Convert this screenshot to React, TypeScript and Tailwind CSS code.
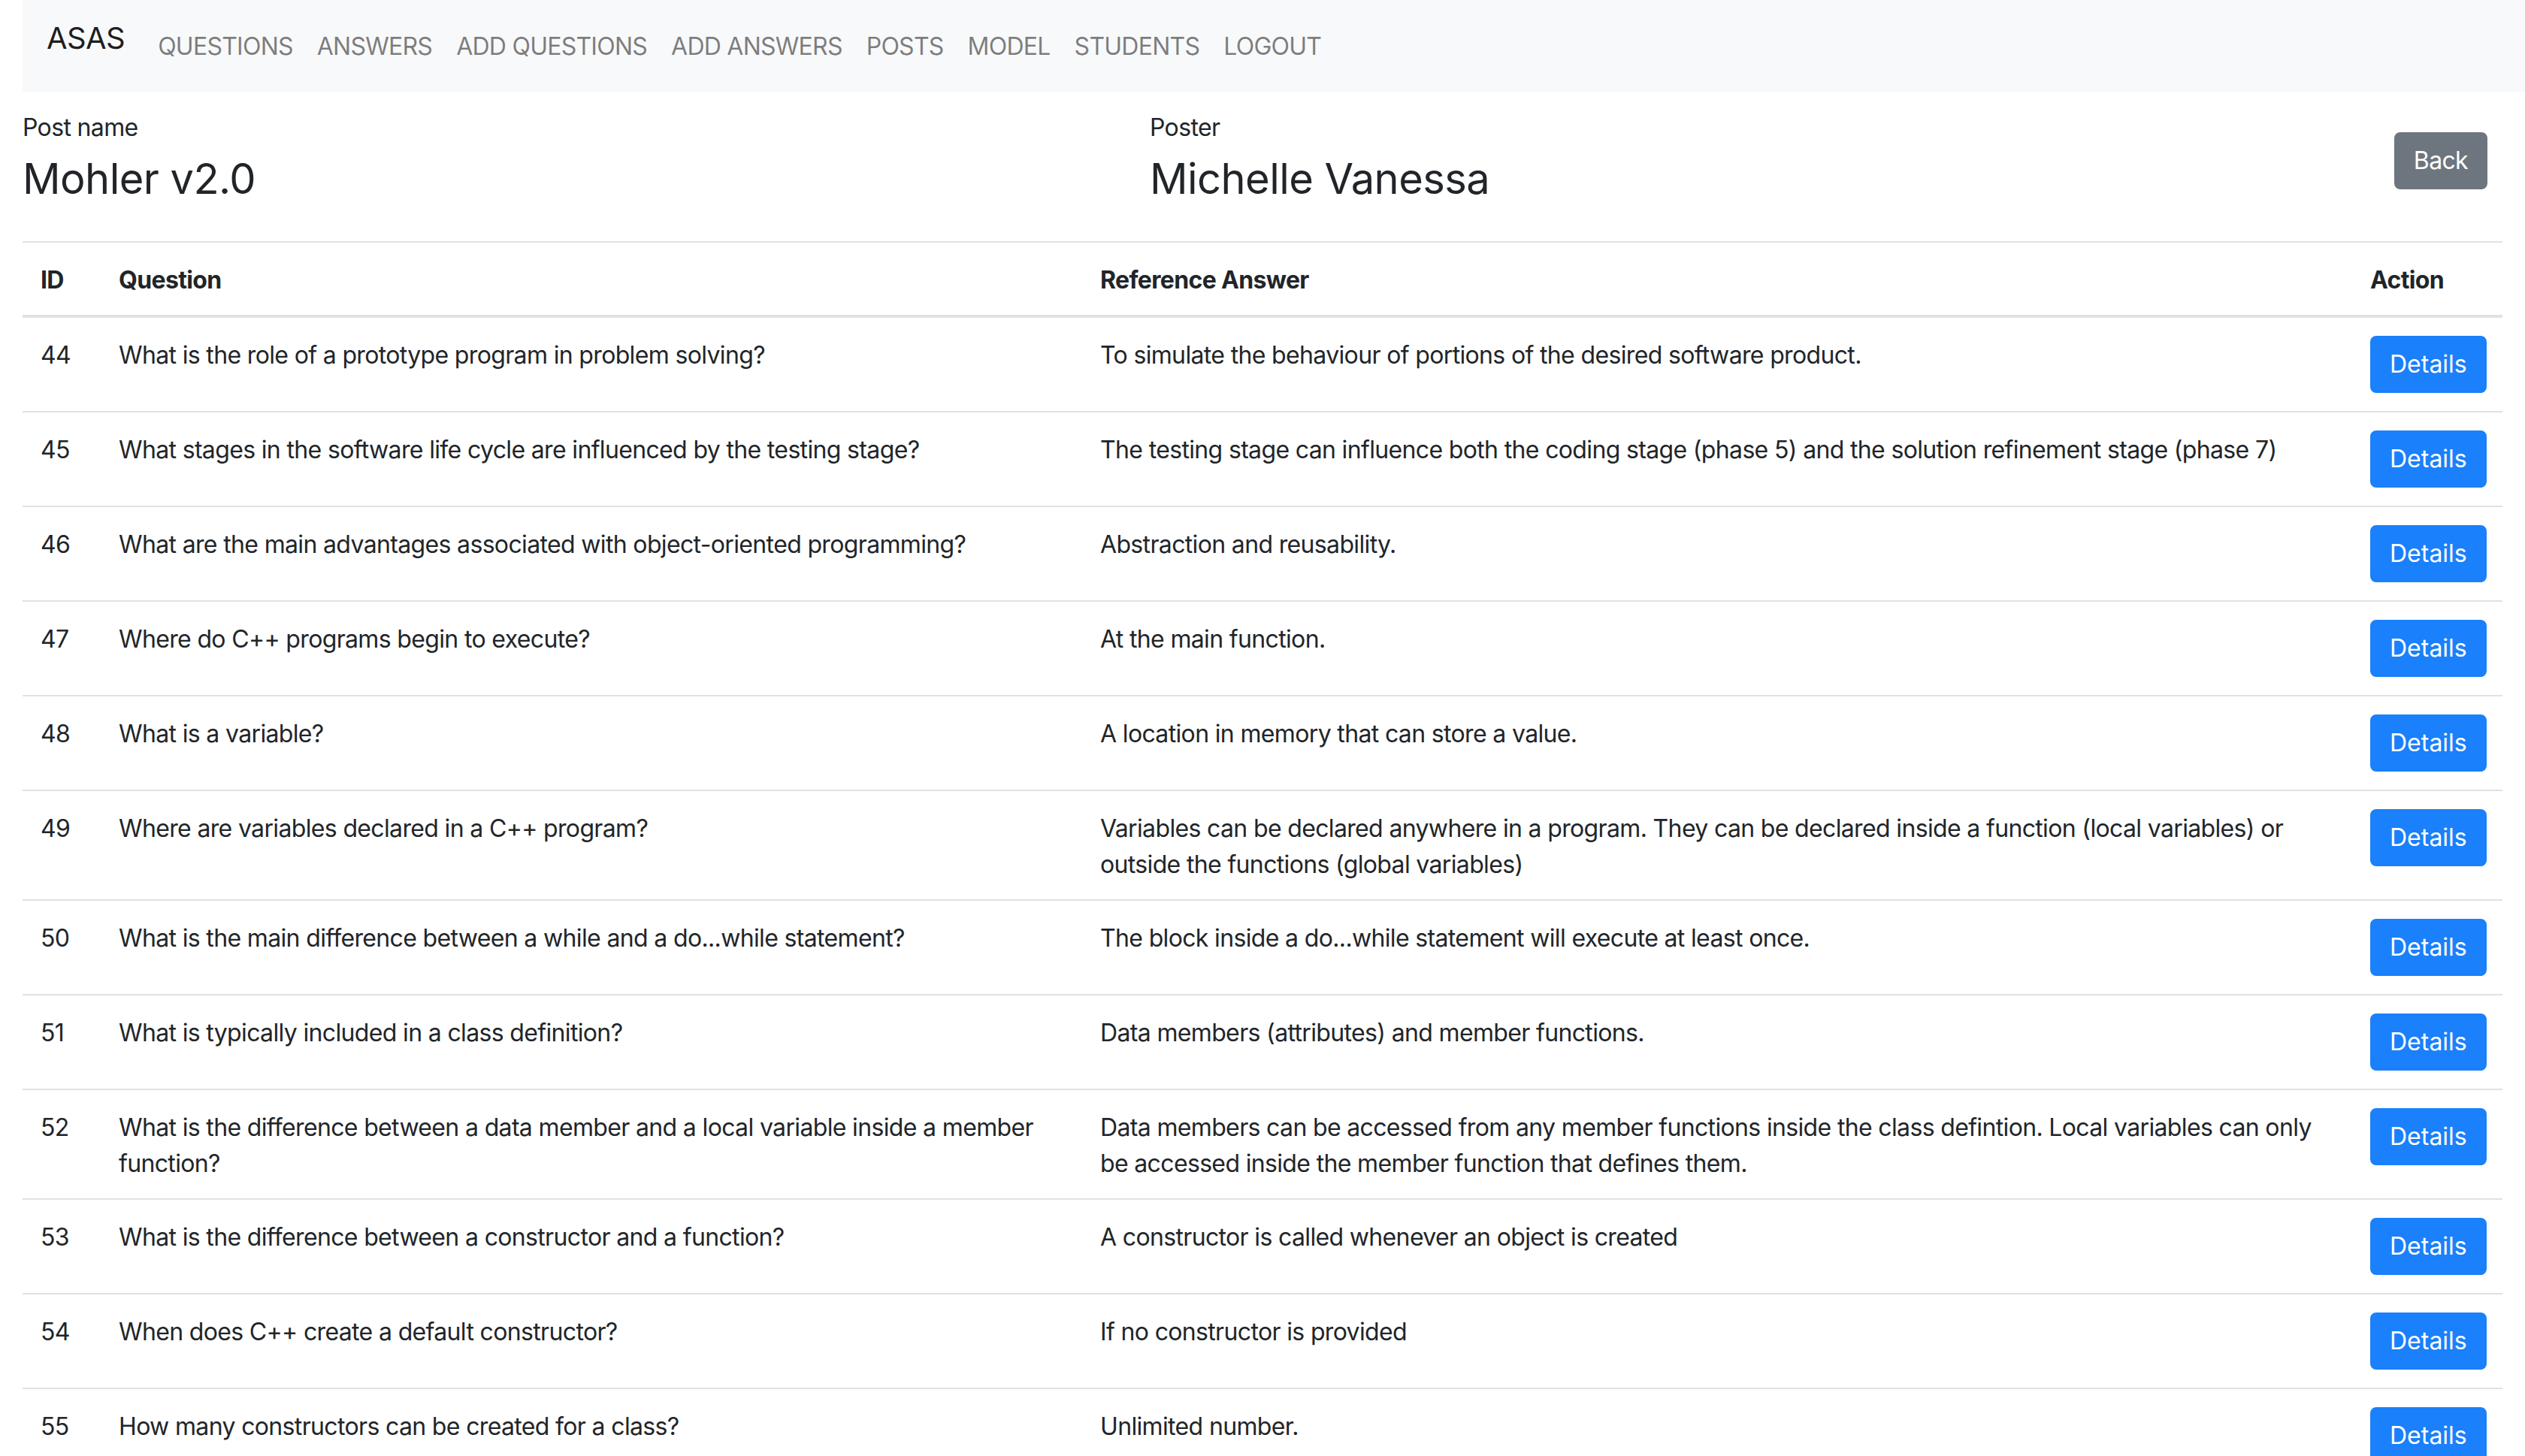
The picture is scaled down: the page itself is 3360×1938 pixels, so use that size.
const navLinks = ["QUESTIONS", "ANSWERS", "ADD QUESTIONS", "ADD ANSWERS", "POSTS", "MODEL", "STUDENTS", "LOGOUT"]

const rows = [
    { id: 44, question: "What is the role of a prototype program in problem solving?", answer: "To simulate the behaviour of portions of the desired software product." },
    { id: 45, question: "What stages in the software life cycle are influenced by the testing stage?", answer: "The testing stage can influence both the coding stage (phase 5) and the solution refinement stage (phase 7)" },
    { id: 46, question: "What are the main advantages associated with object-oriented programming?", answer: "Abstraction and reusability." },
    { id: 47, question: "Where do C++ programs begin to execute?", answer: "At the main function." },
    { id: 48, question: "What is a variable?", answer: "A location in memory that can store a value." },
    { id: 49, question: "Where are variables declared in a C++ program?", answer: "Variables can be declared anywhere in a program. They can be declared inside a function (local variables) or outside the functions (global variables)" },
    { id: 50, question: "What is the main difference between a while and a do...while statement?", answer: "The block inside a do...while statement will execute at least once." },
    { id: 51, question: "What is typically included in a class definition?", answer: "Data members (attributes) and member functions." },
    { id: 52, question: "What is the difference between a data member and a local variable inside a member function?", answer: "Data members can be accessed from any member functions inside the class defintion. Local variables can only be accessed inside the member function that defines them." },
    { id: 53, question: "What is the difference between a constructor and a function?", answer: "A constructor is called whenever an object is created" },
    { id: 54, question: "When does C++ create a default constructor?", answer: "If no constructor is provided" },
    { id: 55, question: "How many constructors can be created for a class?", answer: "Unlimited number." },
]

const cell = "pt-[26px] pb-[22px] px-[24px] align-top border-t-2 border-[#dee2e6]"
const headCell = "pt-[26px] pb-[22px] px-[24px] text-left font-bold border-t-2 border-b-4 border-[#dee2e6]"

export default function App() {
    return (
        <div className="min-h-screen bg-white text-[#212529] text-[32px] leading-[48px] tracking-[-0.65px]" style={{ fontFamily: "Inter, 'Noto Sans', sans-serif" }}>
            <nav className="ml-[30px] h-[123px] bg-[#f8f9fa] flex items-start pl-[32px] pt-[21px]">
                <span className="text-[40px] leading-[60px] text-black/90 mr-[28px] tracking-[-0.6px]">ASAS</span>
                <ul className="flex mt-[17px] tracking-[-0.75px]">
                    {navLinks.map((l) => (
                        <li key={l} className="px-[16px] text-black/50">{l}</li>
                    ))}
                </ul>
            </nav>

            <div className="px-[30px]">
                <div className="flex items-start mt-[23px]">
                    <div className="w-[1500px]">
                        <div>Post name</div>
                        <h3 className="mt-[11px] text-[56px] leading-[67px] tracking-[-0.55px]">Mohler v2.0</h3>
                    </div>
                    <div className="flex-1">
                        <div>Poster</div>
                        <h3 className="mt-[11px] text-[56px] leading-[67px] tracking-[-0.55px]">Michelle Vanessa</h3>
                    </div>
                    <button className="mt-[30px] mr-[20px] px-[24px] py-[12px] border-2 border-[#6d767e] bg-[#6d767e] text-white rounded-[8px]">Back</button>
                </div>

                <table className="mt-[49px] w-full table-fixed border-collapse">
                    <colgroup>
                        <col className="w-[104px]" />
                        <col className="w-[1306px]" />
                        <col className="w-[1690px]" />
                        <col className="w-[200px]" />
                    </colgroup>
                    <thead>
                        <tr>
                            <th className={headCell}>ID</th>
                            <th className={headCell}>Question</th>
                            <th className={headCell}>Reference Answer</th>
                            <th className={headCell}>Action</th>
                        </tr>
                    </thead>
                    <tbody>
                        {rows.map((r) => (
                            <tr key={r.id}>
                                <td className={cell}>{r.id}</td>
                                <td className={cell}>{r.question}</td>
                                <td className={cell}>{r.answer}</td>
                                <td className="pt-[24px] pb-[24px] px-[24px] align-top border-t-2 border-[#dee2e6]">
                                    <button className="px-[24px] py-[12px] border-2 border-[#1a80fb] bg-[#1a80fb] text-white rounded-[8px] tracking-normal">Details</button>
                                </td>
                            </tr>
                        ))}
                    </tbody>
                </table>
            </div>
        </div>
    )
}
